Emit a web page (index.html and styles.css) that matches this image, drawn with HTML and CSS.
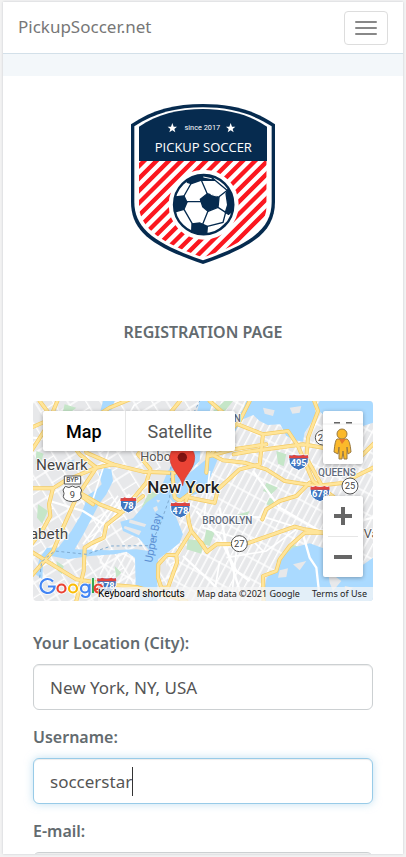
FILE: index.html
```html
<!DOCTYPE html>
<html lang="en">
<head>
<meta charset="utf-8">
<meta name="viewport" content="width=device-width, initial-scale=1">
<title>PickupSoccer.net</title>
<link rel="stylesheet" href="styles.css">
</head>
<body>
<div class="page">
  <header class="navbar">
    <a class="brand" href="#">PickupSoccer.net</a>
    <button class="menu-toggle" type="button" aria-label="Toggle navigation"><span></span><span></span><span></span></button>
  </header>
  <div class="band"></div>
  <main class="content">
    <svg class="logo" viewBox="33 27 432 480" role="img" aria-label="Pickup Soccer">
      <defs>
        <clipPath id="shield"><path d="M57 198H440V330C440 390 390 440 249 487C108 440 57 390 57 330Z"/></clipPath>
        <clipPath id="ball"><circle cx="251" cy="329" r="88"/></clipPath>
      </defs>
      <path d="M249 27C330 27 400 43 465 88V320C465 410 400 455 249 507C98 455 33 410 33 320V88C98 43 168 27 249 27Z" fill="#062b4f"/>
      <path d="M249 37C325 37 392 53 455 94V320C455 400 395 445 249 496C103 445 43 400 43 320V94C106 53 173 37 249 37Z" fill="#fff"/>
      <path d="M249 42C320 42 385 57 441 95V198H57V95C113 57 178 42 249 42Z" fill="#062b4f"/>
      <g clip-path="url(#shield)" stroke="#fb171f" stroke-width="13">
        <path d="M40 230L90 180M40 267L127 180M40 304L164 180M40 341L201 180M40 378L238 180M40 415L275 180M50 442L312 180M70 459L349 180M85 481L386 180M100 503L423 180M137 503L460 180M174 503L460 217M211 503L460 254M248 503L460 291M285 503L460 328"/>
      </g>
      <circle cx="251" cy="329" r="105" fill="#fff"/>
      <circle cx="251" cy="329" r="89" fill="#fff" stroke="#062b4f" stroke-width="7"/>
      <g clip-path="url(#ball)" transform="translate(0 0)">
        <g fill="#062b4f" stroke="#062b4f" stroke-width="4" stroke-linejoin="round">
          <path d="M241 313L262 296L297 307L294 337L264 349L248 335Z"/>
          <path d="M165 306L192 303L201 322L192 343L168 350L158 325Z"/>
          <path d="M202 262L206 250L232 236L268 240L285 256L244 255L214 266Z"/>
          <path d="M216 387L240 384L262 394L260 420L215 412Z"/>
          <path d="M324 283L318 296L323 330L316 352L326 358L345 340L345 300Z"/>
          <path d="M300 402L318 385L325 392L305 408Z"/>
        </g>
        <path d="M201 320H243M262 297L244 256M296 306L322 286M294 337L317 352M264 348L248 388M192 303L214 264M192 343L218 388M262 394L309 382L317 352M285 256L323 287" fill="none" stroke="#062b4f" stroke-width="4"/>
        <path d="M272 298L290 303M250 246L275 251" stroke="#fff" stroke-width="3"/>
      </g>
      <g fill="#fff">
        <path id="star" d="M157 84L161 95H171L163 102L166 112L157 106L148 112L151 102L143 95H153Z"/>
        <use href="#star" x="175"/>
      </g>
      <text class="logo-since" x="247" y="104">since 2017</text>
      <text class="logo-name" x="250" y="171">PICKUP SOCCER</text>
    </svg>

    <h1 class="title">REGISTRATION PAGE</h1>

    <section class="map" aria-label="Map of New York">
      <svg class="map-canvas" viewBox="0 0 1020 600" preserveAspectRatio="xMidYMid slice">
        <defs>
          <pattern id="streets" width="84" height="66" patternUnits="userSpaceOnUse" patternTransform="rotate(-32)">
            <path d="M0 3H84M3 0V66M0 40H50M50 3V66" stroke="#fff" stroke-width="4" fill="none"/>
          </pattern>
          <pattern id="blocks" width="56" height="40" patternUnits="userSpaceOnUse" patternTransform="rotate(-62)">
            <path d="M0 3H56M3 0V40M0 22H56" stroke="#fff" stroke-width="4" fill="none"/>
          </pattern>
          <g id="interstate">
            <path d="M-23 -16L-24 -3Q-27 20 0 30Q27 20 24 -3L23 -16Z" fill="#3f76c0" stroke="#fff" stroke-width="3"/>
            <path d="M-23 -16Q-17 -11 -12 -17Q0 -11 12 -17Q17 -11 23 -16L24 -6H-24Z" fill="#e0433f"/>
          </g>
          <g id="interstate-wide">
            <path d="M-28 -16L-29 -3Q-31 20 0 30Q31 20 29 -3L28 -16Z" fill="#3f76c0" stroke="#fff" stroke-width="3"/>
            <path d="M-28 -16Q-21 -11 -14 -17Q0 -11 14 -17Q21 -11 28 -16L29 -6H-29Z" fill="#e0433f"/>
          </g>
          <g id="highways">
            <path d="M-5 262L60 262L95 240L190 200L240 190L330 212L425 216M75 -5L40 80L-5 150M-5 80L40 60L150 70L230 20L290 -5M20 0L80 80L140 160L190 200L130 290L90 380L60 450L-5 525M60 262L48 310L52 345L30 385L-5 430"/>
            <path d="M140 275L200 310L265 335L330 285M445 -5L375 80L315 160L352 205L340 245L262 338L220 372L212 410L175 427L155 440L152 510L130 600M-5 452L65 495L130 535L240 552L310 558L460 600M240 190L160 155L155 100M130 275L180 310"/>
            <path d="M418 215L425 290L440 300L480 270L490 255M480 255L458 300L468 365L475 390L500 420L522 452M475 390L430 462H402L376 490L375 530L385 560L405 560L432 485L430 462"/>
            <path d="M505 425L522 452L550 430L640 428L720 400L785 377L815 385L872 395L815 395L770 435L740 475L730 510L690 525L692 600M688 355L700 325L740 300L790 285L830 245"/>
            <path d="M470 290L545 305L555 265L620 205L680 190L690 100L615 70L630 40L650 0M520 215L525 155L570 178L635 185L700 205L755 240L850 255L935 245L970 225L1030 195"/>
            <path d="M690 100L765 90L795 135L840 240L950 325M602 160L645 152L810 130L870 140L970 180L1030 120M840 -10L855 30L825 110L820 170L870 260M530 165L602 145L700 130M530 0L610 70L530 165"/>
          </g>
        </defs>
        <rect width="1020" height="600" fill="#e7e8ea"/>
        <rect width="560" height="600" fill="url(#streets)"/>
        <path d="M520 0H1020V600H440V420L350 400V250Z" fill="#e7e8ea"/>
        <path d="M520 0H1020V600H200V450H300L330 560H400V420L450 340Z" fill="url(#blocks)"/>
        <g fill="#c5e6c8">
          <path d="M10 150L32 158L22 190L8 188ZM550 10L575 25L550 65L535 55ZM730 150L760 160L752 196L735 188ZM700 245L735 260L715 280L690 270Z"/>
          <path d="M465 415L512 420L505 458L460 445ZM520 382L545 395L530 435L512 430ZM350 270L375 278L350 315L325 320ZM245 495L265 515L250 530ZM15 310L45 330L28 368L12 350Z"/>
          <path d="M775 430L820 445L795 475L740 500L730 480ZM880 375L930 370L920 398L880 393ZM600 345L650 330L640 352ZM70 480L92 495L87 520L75 510ZM710 290L730 300L720 320L700 310ZM95 10L130 20L105 40L90 30ZM540 30L575 0H600L560 50Z"/>
        </g>
        <g fill="#aadaff">
          <path d="M206 250L198 220L210 200L235 205L240 240L220 280L198 309L151 400L125 445L171 446L230 448L310 445L350 450L318 412L270 390L262 362L300 352L340 305L372 282L388 250L405 210L450 140L488 50L500 0H540L505 110L500 180L460 220L425 258L410 300L425 315L430 350L450 400L440 425L410 450L375 475L372 600H322L308 550L306 470L280 452L245 460L170 465L105 475L55 465L30 490L28 535L8 520L20 470L42 440L75 440L115 390L145 340L165 282L190 266Z"/>
          <path d="M405 284L428 282L452 230L520 175L535 158L558 165L546 194L525 245L490 280L450 285L425 310Z"/>
          <path d="M640 0H840L850 42L815 95L810 122L787 118L760 105L742 70L704 72L680 60L661 42L630 55L600 100L580 130L558 142L566 110L630 25Z"/>
          <path d="M860 0H1020V65L990 75L985 108L960 80L930 30L872 42L848 20Z"/>
          <path d="M752 465L780 440L830 427L871 442V480L895 482L950 520L1020 470V600H686L701 530L730 505Z"/>
          <path d="M210 0H245L235 28L202 30ZM135 110L190 85L165 130ZM90 190L125 175L100 210Z"/>
        </g>
        <g fill="#e7e8ea">
          <path d="M275 375L325 390L318 403L272 382ZM290 355L340 370L335 378L288 365ZM360 320L372 315L375 327L366 333ZM370 296L382 298L375 306ZM690 20L725 28L720 45L695 38ZM770 20L805 15L800 35L778 38ZM740 508L765 502L760 528L735 530ZM780 490L820 480L800 508ZM885 510L925 540L900 570L890 545ZM935 555L960 560L940 575Z"/>
        </g>
        <g fill="none" stroke="#fff" stroke-width="7">
          <path d="M180 450L270 300L290 280M810 400L830 470L850 500L860 590M560 320L580 440L630 600M490 330L560 410L610 510L650 540M450 465L520 530L580 590M0 110L70 120L160 95L230 130L360 155M50 300L150 330L230 380M660 210L740 320L860 390L1020 350"/>
          <path d="M160 440L265 290M150 430L255 284M305 10L230 140L175 310M530 210L510 380L610 410M550 340L700 350L810 385M580 470L700 450L790 385M560 480L540 600M610 450L595 600M650 410L690 450" stroke-width="5"/>
        </g>
        <g fill="none" stroke-linejoin="round" stroke-linecap="round">
          <use href="#highways" stroke="#f4ca62" stroke-width="12"/>
          <use href="#highways" stroke="#ffe59a" stroke-width="8"/>
        </g>
        <path d="M20 530L26 482L65 450L160 460L235 435L350 434L378 380L410 290L415 170L500 0" fill="none" stroke="#7faad0" stroke-width="3" stroke-dasharray="9 8"/>

        <g class="map-text">
          <text class="town" x="9" y="208">Newark</text>
          <text class="town" x="-10" y="413">abeth</text>
          <text class="town town-small" x="322" y="181">Hobo</text>
          <text class="town town-small" x="992" y="410">Va</text>
          <text class="city" x="343" y="276">New York</text>
          <text class="district" x="508" y="368">BROOKLYN</text>
          <text class="district" x="855" y="224">QUEENS</text>
          <text class="district" x="602" y="64">N</text>
          <text class="bay" transform="translate(357 486) rotate(-79)">Upper Bay</text>
        </g>
        <g class="route">
          <path d="M94 225H143V249H94Z"/>
          <text class="byp" x="118" y="244">BYP</text>
          <path d="M97 256Q108 264 118 255Q128 264 139 256L146 267Q140 277 145 287Q143 300 118 302Q93 300 91 287Q96 277 90 267Z"/>
          <text x="118" y="290">9</text>
          <circle cx="951" cy="255" r="24"/><text x="951" y="265">25</text>
          <circle cx="619" cy="428" r="24"/><text x="619" y="438">27</text>
          <circle cx="869" cy="110" r="22"/><text x="862" y="119">2</text>
        </g>
        <g class="freeway">
          <use href="#interstate" x="286" y="306"/><text x="286" y="324">78</text>
          <use href="#interstate-wide" x="442" y="321"/><text x="442" y="338">478</text>
          <use href="#interstate-wide" x="797" y="178"/><text x="797" y="195">495</text>
          <use href="#interstate-wide" x="861" y="272"/><text x="861" y="289">678</text>
          <use href="#interstate-wide" x="221" y="547"/><text x="221" y="565">278</text>
        </g>
        <path d="M449 254C445 225 411 207 411 169A37 37 0 0 1 485 169C485 207 451 225 449 254Z" fill="#ea4335" stroke="#d33426" stroke-width="2"/>
        <circle cx="448" cy="169" r="14" fill="#811411"/>
      </svg>

      <div class="map-type">
        <button class="type-button is-active" type="button">Map</button>
        <button class="type-button" type="button">Satellite</button>
      </div>
      <div class="map-tools">
        <button class="pegman" type="button" aria-label="Street View">
          <svg viewBox="0 0 40 53">
            <path d="M11 12H17M23 12H29" stroke="#666" stroke-width="2"/>
            <path d="M0 13H40" stroke="#eee"/>
            <path d="M14 28Q12 29 11 41L15 43L16 36V48H19L20 40L21 48H24V36L25 43L28 41Q27 29 24 28Z" fill="#fbb92b" stroke="#9a7a40"/>
            <circle cx="19" cy="23" r="5" fill="#fbb92b" stroke="#9a7a40"/>
            <path d="M16 28H23L19 33Z" fill="#e7782b"/>
          </svg>
        </button>
        <div class="zoom">
          <button type="button" aria-label="Zoom in"><svg viewBox="0 0 18 18"><path d="M0 9H18M9 0V18"/></svg></button>
          <button type="button" aria-label="Zoom out"><svg viewBox="0 0 18 18"><path d="M0 9H18"/></svg></button>
        </div>
      </div>
      <div class="map-footer">
        <svg class="google" viewBox="0 0 66 26" role="img" aria-label="Google">
          <defs>
            <path id="g-cap" d="M14 6.5A7 7 0 1 0 15.6 11.5H9"/>
            <path id="g-low" d="M50.5 9V18Q50.5 22 46.500 22Q43.500 22 42.700 19.500"/>
            <path id="g-e" d="M56.500 14.800L63 12Q62 9.500 59.700 9.500A4 4 0 1 0 62.800 15.800"/>
          </defs>
          <g fill="none" stroke="#fff" stroke-width="4" opacity="0.8">
            <use href="#g-cap"/><circle cx="22.500" cy="13.500" r="4"/><circle cx="34" cy="13.500" r="4"/><circle cx="46" cy="13.500" r="4"/><use href="#g-low"/><path d="M54 3V18"/><use href="#g-e"/>
          </g>
          <g fill="none" stroke-width="2.200">
            <use href="#g-cap" stroke="#4285f4"/>
            <circle cx="22.500" cy="13.500" r="4" stroke="#ea4335"/>
            <circle cx="34" cy="13.500" r="4" stroke="#fbbc05"/>
            <circle cx="46" cy="13.500" r="4" stroke="#4285f4"/>
            <use href="#g-low" stroke="#4285f4"/>
            <path d="M54 3V18" stroke="#34a853"/>
            <use href="#g-e" stroke="#ea4335"/>
          </g>
        </svg>
        <div class="credits">
          <button class="shortcuts" type="button">Keyboard shortcuts</button>
          <span>Map data ©2021 Google</span>
          <a href="#">Terms of Use</a>
        </div>
      </div>
    </section>

    <form class="form">
      <div class="field">
        <label for="location">Your Location (City):</label>
        <input id="location" type="text" value="New York, NY, USA">
      </div>
      <div class="field">
        <label for="username">Username:</label>
        <div class="active-field">
          <input id="username" class="is-focused" type="text" value="soccerstar">
          <span class="caret"></span>
        </div>
      </div>
      <div class="field">
        <label for="email">E-mail:</label>
        <input id="email" type="email">
      </div>
    </form>
  </main>
</div>
</body>
</html>
```
FILE: styles.css
```css
* { box-sizing: border-box; }

body {
  margin: 0;
  height: 100vh;
  padding: 2px 3px 3px;
  overflow: hidden;
  background: #f2f2f2;
  color: #636b6f;
  font-family: "Noto Sans", "Open Sans", sans-serif;
  font-size: 17px;
}

button { font-family: inherit; padding: 0; border: 0; background: none; }

.page {
  height: 100%;
  overflow: hidden;
  background: #fff;
  box-shadow: 0 0 2px #c4c8cc;
}

.navbar {
  display: flex;
  align-items: center;
  justify-content: space-between;
  height: 52px;
  padding: 0 15px;
  border-bottom: 1px solid #d3e0e9;
}

.brand { color: #777; text-decoration: none; font-size: 17px; line-height: 24px; padding-bottom: 2px; }

.menu-toggle {
  display: flex;
  flex-direction: column;
  align-items: center;
  justify-content: center;
  gap: 4px;
  width: 44px;
  height: 34px;
  border: 1px solid #ddd;
  border-radius: 4px;
}

.menu-toggle span { width: 22px; height: 2px; border-radius: 1px; background: #888; }

.band { height: 22px; background: #f3f7fa; }

.content { padding: 28px 30px 0; }

.logo { display: block; width: 144px; height: 160px; margin: 0 auto; }

.logo text { fill: #fff; text-anchor: middle; }

.logo-since { font: 22px Roboto, sans-serif; }

.logo-name { font: 39px "Open Sans", sans-serif; }

.title {
  margin: 55px 0;
  text-align: center;
  font-size: 16px;
  font-weight: 600;
  line-height: 27px;
}

.map {
  position: relative;
  height: 200px;
  overflow: hidden;
  border-radius: 4px;
  font-family: Roboto, sans-serif;
}

.map-canvas { display: block; width: 100%; height: 100%; }

.map-text text {
  paint-order: stroke;
  stroke: #fff;
  stroke-width: 5px;
  stroke-linejoin: round;
}

.map-text .town { font-size: 46px; fill: #444; }
.map-text .town-small { font-size: 38px; fill: #555; }
.map-text .city { font-size: 51px; font-weight: 500; fill: #222; }
.map-text .district { font-size: 30px; font-weight: 500; fill: #5f6b7c; }
.map-text .bay { font-size: 33px; fill: #5b8fd3; stroke: none; }

.route { fill: #fff; stroke: #555; stroke-width: 3px; }
.route text { fill: #444; stroke: none; text-anchor: middle; font-size: 28px; }
.route .byp { font-size: 20px; font-weight: 500; }

.freeway text {
  fill: #fff;
  text-anchor: middle;
  font-size: 28px;
  font-weight: 700;
}

.map-type {
  position: absolute;
  top: 10px;
  left: 10px;
  display: flex;
  height: 40px;
  border-radius: 2px;
  background: #fff;
  box-shadow: 0 1px 4px rgba(0, 0, 0, 0.3);
}

.type-button { padding: 0 23px; color: #565656; font-size: 18px; }
.type-button.is-active { color: #000; font-weight: 500; }
.type-button + .type-button { padding-left: 22px; border-left: 1px solid #e6e6e6; }

.map-tools {
  position: absolute;
  top: 10px;
  right: 10px;
  display: flex;
  flex-direction: column;
  gap: 32px;
  width: 40px;
}

.pegman, .zoom {
  border-radius: 2px;
  background: #fff;
  box-shadow: 0 1px 4px rgba(0, 0, 0, 0.3);
}

.pegman { height: 53px; }
.pegman svg { display: block; width: 40px; height: 53px; }

.zoom { padding: 0 5px; }
.zoom button { display: grid; place-items: center; width: 30px; height: 40px; }
.zoom button + button { height: 41px; border-top: 1px solid #e6e6e6; }
.zoom svg { width: 18px; height: 18px; stroke: #666; stroke-width: 4px; }

.map-footer {
  position: absolute;
  right: 0;
  bottom: 0;
  left: 6px;
  display: flex;
  align-items: flex-end;
}

.google { flex: none; width: 66px; height: 26px; margin-right: -7px; }

.credits {
  display: flex;
  flex: 1;
  justify-content: space-between;
  height: 14px;
  padding-right: 6px;
  background: rgba(245, 245, 245, 0.75);
  color: #222;
  font-family: "Noto Sans", sans-serif;
  font-size: 9px;
  line-height: 14px;
  white-space: nowrap;
}

.credits a { color: inherit; text-decoration: none; }
.credits .shortcuts { color: #000; font: 10px/14px Roboto, sans-serif; }

.form { margin-top: 29px; }

.field { margin-bottom: 14px; }

.field label {
  display: block;
  margin-bottom: 8px;
  font-size: 16px;
  font-weight: 600;
  line-height: 26px;
}

.field input {
  display: block;
  width: 100%;
  height: 46px;
  padding: 6px 16px;
  border: 1px solid #ccd0d2;
  border-radius: 6px;
  outline: 0;
  background: #fff;
  color: #555;
  font: 17px "Noto Sans", sans-serif;
  box-shadow: inset 0 1px 1px rgba(0, 0, 0, 0.075);
}

.active-field { position: relative; }

.field .is-focused {
  border-color: #98cbe8;
  box-shadow: inset 0 1px 1px rgba(0, 0, 0, 0.075), 0 0 8px rgba(152, 203, 232, 0.6);
}

.caret {
  position: absolute;
  top: 9px;
  left: 99px;
  width: 1px;
  height: 29px;
  background: #333;
}
```
